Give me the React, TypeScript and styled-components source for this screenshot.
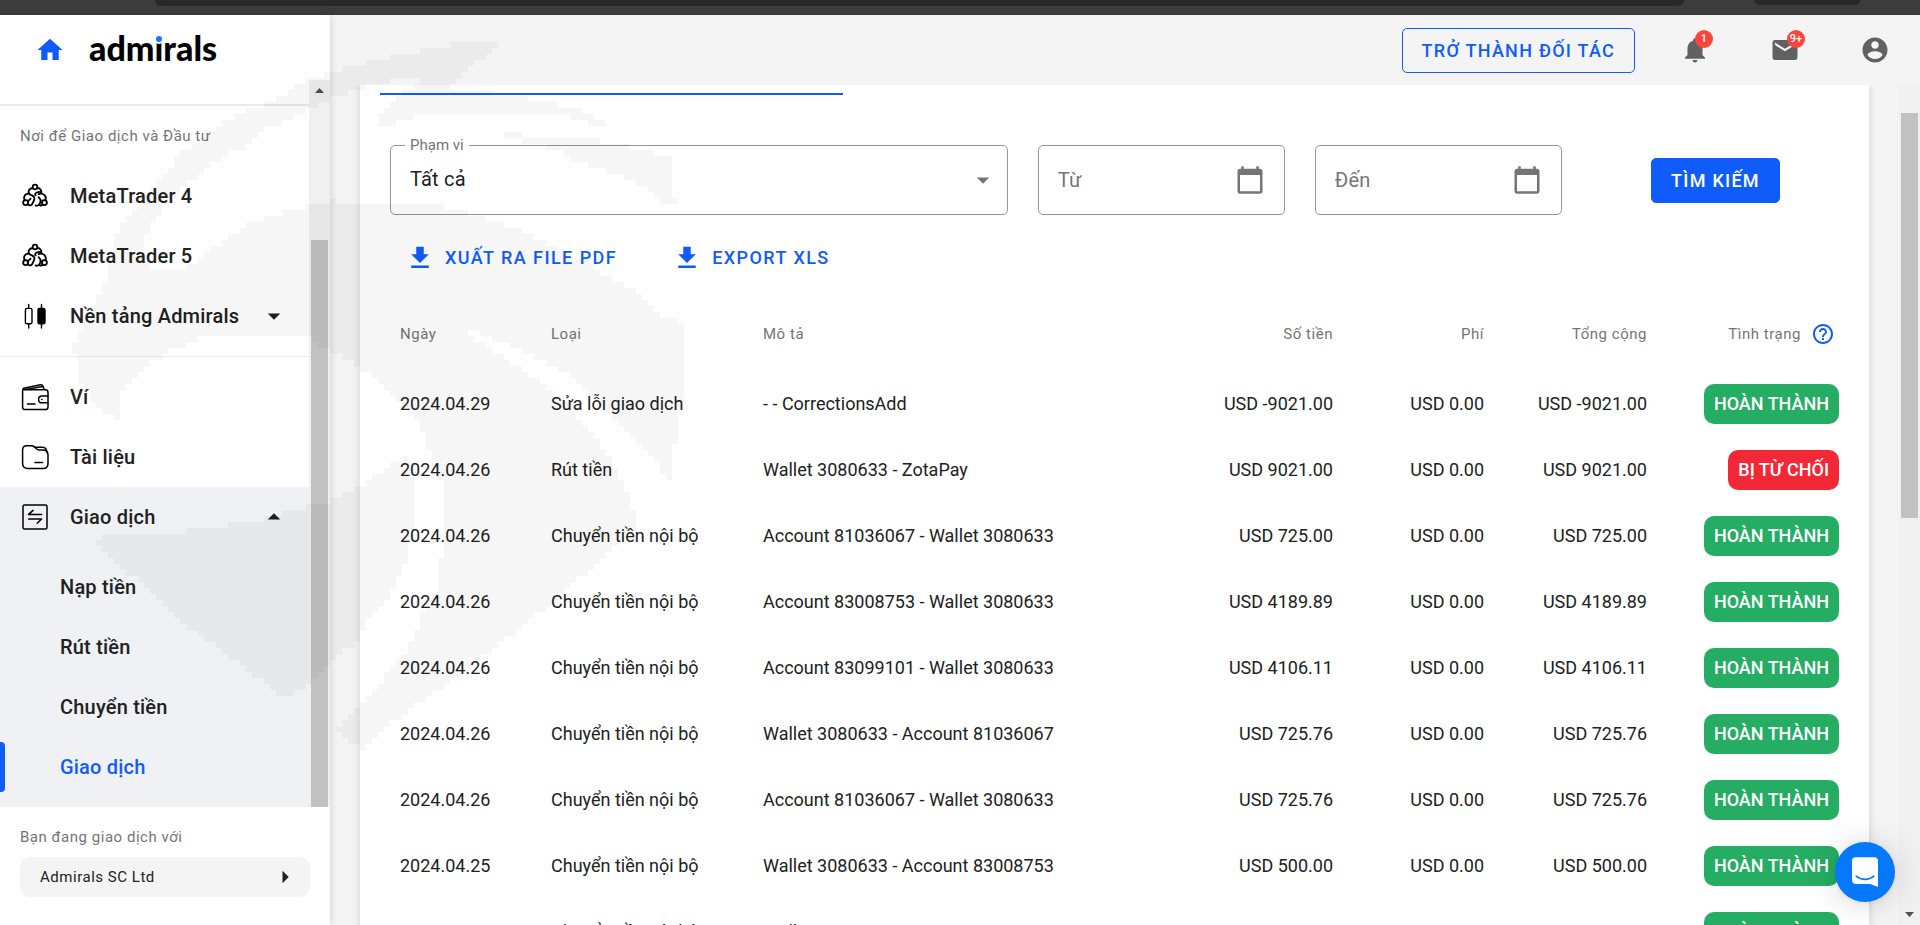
import React from "react";
import styled, { createGlobalStyle } from "styled-components";

const blue = "#105cfb";
const ink = "#212121";
const muted = "#757575";
const captionSpacing = "0.035em";

const GlobalStyle = createGlobalStyle`
  *, *::before, *::after { box-sizing: border-box; }
  body {
    margin: 0;
    background: #f4f4f4;
    color: ${ink};
    font-family: Roboto, "Noto Sans", sans-serif;
    font-size: 18px;
  }
  button, input, select { font-family: inherit; }
`;

/* ---------- shared icons ---------- */

const materialPaths = {
  home: "M10 20v-6h4v6h5v-8h3L12 3 2 12h3v8z",
  bell: "M12 22c1.1 0 2-.9 2-2h-4c0 1.1.89 2 2 2zm6-6v-5c0-3.07-1.64-5.64-4.5-6.32V4c0-.83-.67-1.5-1.5-1.5s-1.5.67-1.5 1.5v.68C7.63 5.36 6 7.92 6 11v5l-2 2v1h16v-1l-2-2z",
  mail: "M20 4H4c-1.1 0-1.99.9-1.99 2L2 18c0 1.1.9 2 2 2h16c1.1 0 2-.9 2-2V6c0-1.1-.9-2-2-2zm0 4l-8 5-8-5V6l8 5 8-5v2z",
  account:
    "M12 2C6.48 2 2 6.48 2 12s4.48 10 10 10 10-4.48 10-10S17.52 2 12 2zm0 3c1.66 0 3 1.34 3 3s-1.34 3-3 3-3-1.34-3-3 1.34-3 3-3zm0 14.2c-2.5 0-4.71-1.28-6-3.22.03-1.99 4-3.08 6-3.08 1.99 0 5.97 1.09 6 3.08-1.29 1.94-3.5 3.22-6 3.22z",
  download: "M19 9h-4V3H9v6H5l7 7 7-7zM5 18v2h14v-2H5z",
  calendar:
    "M20 3h-1V1h-2v2H7V1H5v2H4c-1.1 0-2 .9-2 2v16c0 1.1.9 2 2 2h16c1.1 0 2-.9 2-2V5c0-1.1-.9-2-2-2zm0 18H4V8h16v13z",
  help: "M11 18h2v-2h-2v2zm1-16C6.48 2 2 6.48 2 12s4.48 10 10 10 10-4.48 10-10S17.52 2 12 2zm0 18c-4.41 0-8-3.59-8-8s3.59-8 8-8 8 3.59 8 8-3.59 8-8 8zm0-14c-2.21 0-4 1.79-4 4h2c0-1.1.9-2 2-2s2 .9 2 2c0 2-3 1.75-3 5h2c0-2.25 3-2.5 3-5 0-2.21-1.79-4-4-4z",
  down: "M7 10l5 5 5-5z",
  up: "M7 14l5-5 5 5z",
  right: "M10 17l5-5-5-5z",
};

const IconSvg = styled.svg<{ $size: number }>`
  display: block;
  flex: none;
  width: ${(p) => p.$size}px;
  height: ${(p) => p.$size}px;
  fill: currentColor;
`;

function Icon({ name, size = 30 }: { name: keyof typeof materialPaths; size?: number }) {
  return (
    <IconSvg $size={size} viewBox="0 0 24 24" aria-hidden="true">
      <path d={materialPaths[name]} />
    </IconSvg>
  );
}

const LineSvg = styled.svg`
  display: block;
  flex: none;
  width: 30px;
  height: 30px;
  fill: none;
  stroke: #000;
  stroke-linecap: round;
  stroke-linejoin: round;
`;

const TraderIcon = () => (
  <LineSvg viewBox="0 0 30 30" strokeWidth="1.8" aria-hidden="true">
    <circle cx="15" cy="6" r="2.3" />
    <circle cx="5.6" cy="21.6" r="2.5" />
    <circle cx="24.4" cy="21.6" r="2.5" />
    <path d="M12.6 7C9.4 7.2 7.6 10.4 9.2 12.7C10.3 14.4 13.5 14 14.3 16.6C15 19.3 12.9 20.7 12.2 23.2C11.2 25.3 8.4 24.3 7.8 23" />
    <path d="M17.4 7C20.3 7.2 21.6 9.2 21.4 11.4C19 10 13.4 12.2 15.6 14.4" />
    <path d="M4.8 19.2C2.8 15.8 5.2 12.4 8.8 12.6" />
    <path d="M18.6 13.2C23 11.4 27 15 25.4 19.2" />
    <path d="M7.9 20.3L10.6 17.6" />
    <path d="M18.6 16.2C20.8 18.4 21.8 20.4 19.4 23C18.8 24.4 17 25.2 15.6 24.4M20 24.4C21 24.7 22 24.3 22.6 23.4" />
  </LineSvg>
);

const CandlesIcon = () => (
  <LineSvg viewBox="0 0 30 30" strokeWidth="1.4" aria-hidden="true">
    <rect x="5.4" y="7.4" width="6.6" height="15.4" rx="1.6" />
    <path d="M8.7 3.4V7M8.7 23.2V27M21.5 3.4V7M21.5 23.2V27" />
    <rect x="18" y="7.4" width="7" height="15.4" rx="1.6" fill="#000" />
  </LineSvg>
);

const WalletIcon = () => (
  <LineSvg viewBox="0 0 30 30" strokeWidth="1.5" aria-hidden="true">
    <path d="M2.6 8.4V25Q2.6 27.6 5.2 27.6H25.4Q28 27.6 28 25V10.4Q28 7.8 25.4 7.8H3.6Q2 7.4 3.8 6.2L20.4 2.7Q22.6 2.4 23.2 4.4L24.2 7.4M6 7.4L22.6 4.6" />
    <path d="M28 14H22Q18.6 14 18.6 17.4T22 20.8H28M21.8 17.4h.2M7.4 22H15" />
  </LineSvg>
);

const FolderIcon = () => (
  <LineSvg viewBox="0 0 30 30" strokeWidth="1.5" aria-hidden="true">
    <path d="M6.6 3.8H12Q13.4 3.8 14.4 4.8L16.4 6.8Q17.4 8 19 8H22.6Q28 8 28 13V21.4Q28 26.4 23 26.4H8Q2.6 26.4 2.6 21.4V8Q2.6 3.8 6.6 3.8Z" />
    <path d="M14.4 5.2H22.6Q26.6 5.2 27 10.6M15 20.6H22.6" />
  </LineSvg>
);

const TransferIcon = () => (
  <LineSvg viewBox="0 0 30 30" strokeWidth="1.5" aria-hidden="true">
    <rect x="3" y="3" width="24" height="24" rx="1.6" />
    <path d="M13 8.4L8.6 12.4H21.6M8.6 17H21.6L17.2 21.2" />
  </LineSvg>
);

/* ---------- page frame ---------- */

const Page = styled.div`
  position: relative;
  display: flex;
  flex-direction: column;
  height: 100vh;
  overflow: hidden;
`;

const BrowserEdge = styled.div`
  flex: none;
  display: flex;
  height: 15px;
  padding: 0 60px 0 155px;
  gap: 70px;
  background: #3c3c3c;
`;

const EdgePill = styled.div<{ $wide?: boolean }>`
  flex: ${(p) => (p.$wide ? "1" : "0 0 106px")};
  height: ${(p) => (p.$wide ? 6 : 5)}px;
  border-radius: 0 0 14px 14px;
  background: #282828;
`;

const Body = styled.div`
  flex: 1;
  min-height: 0;
  display: flex;
`;

/* ---------- scroll rail ---------- */

const Rail = styled.div`
  flex: none;
  width: 21px;
  display: flex;
  flex-direction: column;
  align-items: center;
  background: #f0f0f0;
  color: #505050;
`;

const RailArrow = styled.span<{ $hidden?: boolean }>`
  flex: none;
  height: 21px;
  display: grid;
  place-items: center;
  visibility: ${(p) => (p.$hidden ? "hidden" : "visible")};
`;

const RailGap = styled.span<{ $grow: number }>`
  flex: ${(p) => p.$grow} 1 0;
`;

const RailThumb = styled.span<{ $grow: number }>`
  flex: ${(p) => p.$grow} 1 0;
  width: 17px;
  background: #c1c1c1;
`;

const RailGlyph = ({ up }: { up?: boolean }) => (
  <svg width="9" height="5" viewBox="0 0 9 5" fill="currentColor" aria-hidden="true">
    <path d={up ? "M0 5L4.5 0L9 5Z" : "M0 0L4.5 5L9 0Z"} />
  </svg>
);

/* ---------- sidebar ---------- */

const Sidebar = styled.aside`
  flex: none;
  width: 330px;
  display: flex;
  flex-direction: column;
  background: #fff;
  box-shadow: 0 0 8px rgba(0, 0, 0, 0.16);
  z-index: 1;
`;

const Brand = styled.div`
  flex: none;
  height: 65px;
  padding: 4px 0 0 35px;
  display: flex;
  align-items: center;
  gap: 24px;
`;

const HomeLink = styled.a`
  color: ${blue};
`;

const Logo = styled.span`
  padding-bottom: 4px;
  font-family: Lato, sans-serif;
  font-weight: 900;
  font-size: 34px;
  line-height: 40px;
  color: #000;
  white-space: nowrap;
`;

/* The "i" carries a round blue dot in place of the typeface's own. */
const LogoI = styled.span`
  position: relative;
  display: inline-block;

  &::after {
    content: "";
    position: absolute;
    left: calc(50% - 3px);
    top: 8px;
    width: 6px;
    height: 6px;
    border-radius: 50%;
    background: #0a7cff;
    box-shadow: 0 0 0 2px #fff;
  }
`;

const SideScroll = styled.div`
  flex: 1;
  min-height: 0;
  display: flex;
`;

const Nav = styled.nav`
  flex: 1;
  min-width: 0;
  overflow: hidden;
  padding-top: 24px;
`;

const NavSection = styled.div<{ $first?: boolean }>`
  border-top: ${(p) => (p.$first ? 2 : 1)}px solid #ebebeb;
  padding: ${(p) => (p.$first ? "0 0 10px" : "10px 0 0")};
`;

const NavHeading = styled.div`
  height: 60px;
  padding: 0 20px;
  display: flex;
  align-items: center;
  font-size: 15px;
  letter-spacing: ${captionSpacing};
  color: ${muted};
`;

const NavGroup = styled.div`
  background: #f0f1f4;
  padding-bottom: 10px;
`;

const NavItem = styled.a`
  height: 60px;
  padding: 0 20px;
  display: flex;
  align-items: center;
  gap: 20px;
  font-size: 20px;
  font-weight: 500;
  letter-spacing: 0.01em;
  color: ${ink};
  text-decoration: none;
  white-space: nowrap;
`;

const NavLabel = styled.span`
  flex: 1;
  min-width: 0;
`;

const SubList = styled.div`
  padding-top: 10px;
`;

const SubItem = styled.a<{ $active?: boolean }>`
  position: relative;
  height: 60px;
  padding-left: 60px;
  display: flex;
  align-items: center;
  font-size: 20px;
  font-weight: 500;
  letter-spacing: 0.01em;
  color: ${(p) => (p.$active ? blue : ink)};
  text-decoration: none;

  &::before {
    content: "";
    display: ${(p) => (p.$active ? "block" : "none")};
    position: absolute;
    left: 0;
    top: 5px;
    bottom: 5px;
    width: 5px;
    border-radius: 0 4px 4px 0;
    background: ${blue};
  }
`;

const Entity = styled.div`
  flex: none;
  padding: 20px 20px 28px;
`;

const EntityLabel = styled.div`
  height: 20px;
  line-height: 20px;
  margin-bottom: 10px;
  font-size: 15px;
  letter-spacing: ${captionSpacing};
  color: ${muted};
`;

const EntityButton = styled.button`
  width: 100%;
  height: 40px;
  padding: 0 10px 0 20px;
  display: flex;
  align-items: center;
  justify-content: space-between;
  border: 0;
  border-radius: 10px;
  background: #f4f4f4;
  font-size: 15px;
  letter-spacing: ${captionSpacing};
  color: ${ink};
`;

/* ---------- main column ---------- */

const Main = styled.main`
  flex: 1;
  min-width: 0;
  display: flex;
  flex-direction: column;
`;

const TopBar = styled.header`
  flex: none;
  height: 70px;
  padding-right: 30px;
  display: flex;
  align-items: center;
  justify-content: flex-end;
`;

const Button = styled.button<{ $filled?: boolean }>`
  height: 45px;
  padding: 0 19px;
  border: 1px solid ${blue};
  border-radius: 5px;
  background: ${(p) => (p.$filled ? blue : "transparent")};
  color: ${(p) => (p.$filled ? "#fff" : blue)};
  font-size: 18px;
  font-weight: 500;
  letter-spacing: 0.07em;
  text-transform: uppercase;
  white-space: nowrap;
`;

const IconRow = styled.div`
  margin-left: 45px;
  display: flex;
  gap: 60px;
`;

const IconButton = styled.button`
  position: relative;
  padding: 0;
  border: 0;
  background: none;
  color: #616161;
`;

const Badge = styled.span<{ $wide?: boolean }>`
  position: absolute;
  top: -5px;
  right: ${(p) => (p.$wide ? -5 : -3)}px;
  width: 18px;
  height: 18px;
  border-radius: 9px;
  background: #ff4539;
  color: #fff;
  font-size: 11px;
  font-weight: 500;
  line-height: 18px;
  text-align: center;
`;

const Viewport = styled.div`
  flex: 1;
  min-height: 0;
  display: flex;
`;

const Scroller = styled.div`
  flex: 1;
  min-width: 0;
  overflow: hidden;
  padding: 0 30px;
`;

const Card = styled.section`
  min-height: 100%;
  padding: 8px 20px 0;
  background: #fff;
  box-shadow: 0 0 8px rgba(0, 0, 0, 0.14);
`;

const TabMarker = styled.div`
  width: 31.5%;
  height: 2px;
  background: ${blue};
`;

const Filters = styled.form`
  margin: 50px 10px 0;
  display: grid;
  grid-template-columns: minmax(0, 5fr) repeat(3, minmax(0, 2fr));
  gap: 30px;
  align-items: center;
`;

const Field = styled.div`
  position: relative;
  height: 70px;
  display: flex;
  align-items: center;
  border: 1px solid #949494;
  border-radius: 5px;
`;

const FieldLabel = styled.label`
  position: absolute;
  top: -10px;
  left: 14px;
  padding: 0 5px;
  background: #fff;
  font-size: 15px;
  line-height: 18px;
  color: ${muted};
`;

const Select = styled.select`
  appearance: none;
  width: 100%;
  height: 100%;
  padding: 0 50px 2px 19px;
  border: 0;
  background: none;
  font-size: 20px;
  letter-spacing: 0.01em;
  color: ${ink};
`;

const SelectArrow = styled.span`
  position: absolute;
  right: 9px;
  color: ${muted};
  pointer-events: none;
`;

const DateInput = styled.input`
  flex: 1;
  min-width: 0;
  height: 100%;
  padding: 0 0 0 19px;
  border: 0;
  background: none;
  font-size: 20px;
  letter-spacing: 0.01em;
  color: ${ink};

  &::placeholder {
    color: ${muted};
    opacity: 1;
  }
`;

const CalendarButton = styled.button`
  margin-right: 19px;
  padding: 0;
  border: 0;
  background: none;
  color: ${muted};
`;

const SearchSlot = styled.div`
  display: flex;
  justify-content: center;
`;

const Exports = styled.div`
  margin: 20px 10px 0;
  display: flex;
  gap: 20px;
`;

const ExportButton = styled.button`
  height: 45px;
  padding: 0 20px 0 15px;
  display: flex;
  align-items: center;
  gap: 10px;
  border: 0;
  background: none;
  color: ${blue};
  font-size: 18px;
  font-weight: 500;
  letter-spacing: 0.08em;
`;

const Table = styled.table`
  width: calc(100% - 10px);
  margin: 17px 0 0 10px;
  border-collapse: collapse;
  table-layout: fixed;
`;

const Col = styled.col<{ $w?: number }>`
  width: ${(p) => (p.$w ? `${p.$w}px` : "auto")};
`;

const Th = styled.th<{ $right?: boolean }>`
  height: 74px;
  padding: 0 10px;
  text-align: ${(p) => (p.$right ? "right" : "left")};
  font-size: 15px;
  font-weight: 400;
  letter-spacing: ${captionSpacing};
  color: ${muted};
  white-space: nowrap;
`;

const Td = styled.td<{ $right?: boolean }>`
  height: 66px;
  padding: 0 10px 2px;
  text-align: ${(p) => (p.$right ? "right" : "left")};
  font-size: 18px;
  white-space: nowrap;
`;

const StatusCell = styled(Td)`
  padding-bottom: 0;
`;

const StatusHead = styled.span`
  display: flex;
  align-items: center;
  justify-content: flex-end;
  gap: 10px;
  padding-right: 4px;
`;

const HelpButton = styled.button`
  padding: 0;
  border: 0;
  background: none;
  color: ${blue};
`;

const Status = styled.span<{ $bad?: boolean }>`
  display: inline-block;
  height: 40px;
  padding: 0 10px;
  border-radius: 10px;
  background: ${(p) => (p.$bad ? "#f32837" : "#25ae63")};
  color: #fff;
  font-size: 18px;
  font-weight: 500;
  line-height: 39px;
  vertical-align: middle;
`;

const ChatButton = styled.button`
  position: absolute;
  right: 25px;
  bottom: 23px;
  width: 60px;
  height: 60px;
  padding: 0;
  display: grid;
  place-items: center;
  border: 0;
  border-radius: 50%;
  background: #0678fb;
  box-shadow: 0 1px 6px rgba(0, 0, 0, 0.06), 0 2px 32px rgba(0, 0, 0, 0.16);
  z-index: 2;
`;

/* ---------- blocky emblem laid over the page ---------- */

const emblemShapes: number[][][] = [
  [
    [501, 45], [450, 45], [407, 53], [368, 62], [347, 68], [310, 80], [287, 92], [263, 105], [227, 120],
    [203, 138], [183, 152], [160, 177], [143, 197], [127, 218], [114, 238], [109, 276], [97, 300], [80, 330],
    [74, 347], [80, 383], [92, 400], [113, 418], [125, 421], [120, 413], [120, 392], [143, 370], [167, 352],
    [188, 343], [212, 334], [267, 334], [310, 339], [328, 350], [360, 367], [378, 380], [397, 397], [417, 420],
    [427, 442], [433, 460], [443, 487], [444, 530], [438, 587], [420, 620], [410, 647], [397, 663], [380, 683],
    [363, 703], [343, 720], [334, 730], [350, 743], [362, 749], [380, 733], [417, 703], [453, 680], [487, 653],
    [517, 630], [553, 603], [577, 580], [617, 547], [633, 530], [633, 510], [623, 483], [607, 453], [590, 430],
    [567, 403], [533, 377], [507, 360], [487, 347], [467, 334], [460, 327], [483, 335], [523, 351], [563, 371],
    [587, 391], [610, 413], [640, 443], [660, 467], [665, 478], [670, 478], [674, 450], [680, 427], [682, 377],
    [686, 367], [686, 335], [680, 323], [657, 313], [643, 300], [634, 290], [600, 273], [584, 260], [560, 250],
    [542, 242], [517, 230], [484, 218], [466, 212], [444, 207], [409, 202], [333, 201], [300, 208], [273, 217],
    [247, 225], [227, 238], [210, 250], [197, 260], [182, 270], [150, 270], [143, 260], [141, 240], [153, 223],
    [163, 207], [183, 187], [207, 170], [227, 153], [247, 147], [257, 133], [287, 120], [310, 108], [330, 100],
    [353, 92], [380, 83], [400, 79], [422, 80], [418, 85], [400, 95], [390, 107], [375, 120], [375, 126],
    [390, 125], [400, 120], [427, 114], [555, 114], [575, 119], [593, 125], [610, 125], [593, 115], [575, 108],
    [549, 103], [522, 98], [484, 92], [448, 93], [457, 77], [473, 65], [486, 55],
  ],
  [
    [506, 132], [531, 137], [593, 137], [607, 143], [642, 149], [674, 160], [675, 200], [680, 207], [670, 207],
    [658, 197], [642, 187], [616, 173], [580, 163], [562, 153], [531, 142], [506, 138],
  ],
  [
    [97, 542], [103, 537], [177, 532], [227, 525], [260, 520], [283, 513], [307, 507], [333, 500], [360, 487],
    [370, 480], [383, 472], [403, 457], [408, 457], [415, 463], [415, 517], [408, 553], [397, 583], [387, 600],
    [367, 623], [357, 640], [333, 662], [313, 677], [305, 688], [285, 698], [257, 677], [230, 657], [213, 643],
    [200, 637], [177, 617], [153, 597], [133, 577], [117, 563], [103, 550],
  ],
];

const CELL = 6;

/* Cuts a polygon into horizontal bands and rounds each band to whole cells. */
function blockPath(points: number[][]): string {
  const snap = (v: number) => Math.round(v / CELL) * CELL;
  const ys = points.map((p) => p[1]);
  let d = "";
  for (let y = snap(Math.min(...ys)) - CELL; y <= Math.max(...ys); y += CELL) {
    const mid = y + CELL / 2 + 0.01;
    const hits: number[] = [];
    points.forEach(([x1, y1], i) => {
      const [x2, y2] = points[(i + 1) % points.length];
      if (y1 > mid !== y2 > mid) hits.push(x1 + ((mid - y1) / (y2 - y1)) * (x2 - x1));
    });
    hits.sort((a, b) => a - b);
    for (let i = 0; i + 1 < hits.length; i += 2) {
      const a = snap(hits[i]);
      const b = snap(hits[i + 1]);
      if (b > a) d += `M${a} ${y}H${b}V${y + CELL}H${a}Z`;
    }
  }
  return d;
}

const emblemPath = emblemShapes.map(blockPath).join("");

const Emblem = styled.svg`
  position: absolute;
  left: 0;
  top: 0;
  width: 720px;
  height: 780px;
  fill: rgba(0, 0, 0, 0.037);
  shape-rendering: crispEdges;
  pointer-events: none;
  z-index: 3;
`;

/* ---------- data ---------- */

const DONE = "HOÀN THÀNH";
const INTERNAL = "Chuyển tiền nội bộ";

const rows = [
  { date: "2024.04.29", type: "Sửa lỗi giao dịch", text: "- - CorrectionsAdd", sum: "USD -9021.00" },
  { date: "2024.04.26", type: "Rút tiền", text: "Wallet 3080633 - ZotaPay", sum: "USD 9021.00", bad: true },
  { date: "2024.04.26", type: INTERNAL, text: "Account 81036067 - Wallet 3080633", sum: "USD 725.00" },
  { date: "2024.04.26", type: INTERNAL, text: "Account 83008753 - Wallet 3080633", sum: "USD 4189.89" },
  { date: "2024.04.26", type: INTERNAL, text: "Account 83099101 - Wallet 3080633", sum: "USD 4106.11" },
  { date: "2024.04.26", type: INTERNAL, text: "Wallet 3080633 - Account 81036067", sum: "USD 725.76" },
  { date: "2024.04.26", type: INTERNAL, text: "Account 81036067 - Wallet 3080633", sum: "USD 725.76" },
  { date: "2024.04.25", type: INTERNAL, text: "Wallet 3080633 - Account 83008753", sum: "USD 500.00" },
  { date: "2024.04.25", type: INTERNAL, text: "Wallet 3080633 - Account 83008753", sum: "USD 500.00" },
];

const subItems = ["Nạp tiền", "Rút tiền", "Chuyển tiền", "Giao dịch"];

/* ---------- app ---------- */

export default function App() {
  return (
    <>
      <GlobalStyle />
      <Page>
        <BrowserEdge>
          <EdgePill $wide />
          <EdgePill />
        </BrowserEdge>
        <Body>
          <Sidebar>
            <Brand>
              <HomeLink href="#home" aria-label="Home">
                <Icon name="home" />
              </HomeLink>
              <Logo>
                adm<LogoI>i</LogoI>rals
              </Logo>
            </Brand>
            <SideScroll>
              <Nav>
                <NavSection $first>
                  <NavHeading>Nơi để Giao dịch và Đầu tư</NavHeading>
                  <NavItem href="#mt4">
                    <TraderIcon />
                    <NavLabel>MetaTrader 4</NavLabel>
                  </NavItem>
                  <NavItem href="#mt5">
                    <TraderIcon />
                    <NavLabel>MetaTrader 5</NavLabel>
                  </NavItem>
                  <NavItem href="#platform">
                    <CandlesIcon />
                    <NavLabel>Nền tảng Admirals</NavLabel>
                    <Icon name="down" />
                  </NavItem>
                </NavSection>
                <NavSection>
                  <NavItem href="#wallet">
                    <WalletIcon />
                    <NavLabel>Ví</NavLabel>
                  </NavItem>
                  <NavItem href="#documents">
                    <FolderIcon />
                    <NavLabel>Tài liệu</NavLabel>
                  </NavItem>
                  <NavGroup>
                    <NavItem href="#transactions">
                      <TransferIcon />
                      <NavLabel>Giao dịch</NavLabel>
                      <Icon name="up" />
                    </NavItem>
                    <SubList>
                      {subItems.map((label, i) => (
                        <SubItem key={label} href={`#sub-${i}`} $active={i === 3}>
                          {label}
                        </SubItem>
                      ))}
                    </SubList>
                  </NavGroup>
                </NavSection>
              </Nav>
              <Rail aria-hidden="true">
                <RailArrow>
                  <RailGlyph up />
                </RailArrow>
                <RailGap $grow={139} />
                <RailThumb $grow={567} />
              </Rail>
            </SideScroll>
            <Entity>
              <EntityLabel>Bạn đang giao dịch với</EntityLabel>
              <EntityButton type="button">
                Admirals SC Ltd
                <Icon name="right" />
              </EntityButton>
            </Entity>
          </Sidebar>

          <Main>
            <TopBar>
              <Button type="button">Trở thành đối tác</Button>
              <IconRow>
                <IconButton type="button" aria-label="Thông báo">
                  <Icon name="bell" />
                  <Badge>1</Badge>
                </IconButton>
                <IconButton type="button" aria-label="Thư">
                  <Icon name="mail" />
                  <Badge $wide>9+</Badge>
                </IconButton>
                <IconButton type="button" aria-label="Tài khoản">
                  <Icon name="account" />
                </IconButton>
              </IconRow>
            </TopBar>
            <Viewport>
              <Scroller>
                <Card>
                  <TabMarker />
                  <Filters onSubmit={(e) => e.preventDefault()}>
                    <Field>
                      <FieldLabel htmlFor="range">Phạm vi</FieldLabel>
                      <Select id="range">
                        <option>Tất cả</option>
                      </Select>
                      <SelectArrow>
                        <Icon name="down" />
                      </SelectArrow>
                    </Field>
                    <Field>
                      <DateInput aria-label="Từ" placeholder="Từ" />
                      <CalendarButton type="button" aria-label="Chọn ngày bắt đầu">
                        <Icon name="calendar" />
                      </CalendarButton>
                    </Field>
                    <Field>
                      <DateInput aria-label="Đến" placeholder="Đến" />
                      <CalendarButton type="button" aria-label="Chọn ngày kết thúc">
                        <Icon name="calendar" />
                      </CalendarButton>
                    </Field>
                    <SearchSlot>
                      <Button type="submit" $filled>
                        Tìm kiếm
                      </Button>
                    </SearchSlot>
                  </Filters>
                  <Exports>
                    <ExportButton type="button">
                      <Icon name="download" />
                      XUẤT RA FILE PDF
                    </ExportButton>
                    <ExportButton type="button">
                      <Icon name="download" />
                      EXPORT XLS
                    </ExportButton>
                  </Exports>
                  <Table>
                    <colgroup>
                      <Col $w={151} />
                      <Col $w={212} />
                      <Col />
                      <Col $w={180} />
                      <Col $w={151} />
                      <Col $w={163} />
                      <Col $w={192} />
                    </colgroup>
                    <thead>
                      <tr>
                        <Th>Ngày</Th>
                        <Th>Loại</Th>
                        <Th>Mô tả</Th>
                        <Th $right>Số tiền</Th>
                        <Th $right>Phí</Th>
                        <Th $right>Tổng cộng</Th>
                        <Th $right>
                          <StatusHead>
                            Tình trạng
                            <HelpButton type="button" aria-label="Trợ giúp">
                              <Icon name="help" size={24} />
                            </HelpButton>
                          </StatusHead>
                        </Th>
                      </tr>
                    </thead>
                    <tbody>
                      {rows.map((row, i) => (
                        <tr key={i}>
                          <Td>{row.date}</Td>
                          <Td>{row.type}</Td>
                          <Td>{row.text}</Td>
                          <Td $right>{row.sum}</Td>
                          <Td $right>USD 0.00</Td>
                          <Td $right>{row.sum}</Td>
                          <StatusCell $right>
                            <Status $bad={row.bad}>{row.bad ? "BỊ TỪ CHỐI" : DONE}</Status>
                          </StatusCell>
                        </tr>
                      ))}
                    </tbody>
                  </Table>
                </Card>
              </Scroller>
              <Rail aria-hidden="true">
                <RailArrow $hidden>
                  <RailGlyph up />
                </RailArrow>
                <RailGap $grow={7} />
                <RailThumb $grow={405} />
                <RailGap $grow={386} />
                <RailArrow>
                  <RailGlyph />
                </RailArrow>
              </Rail>
            </Viewport>
          </Main>
        </Body>
        <ChatButton type="button" aria-label="Chat">
          <svg width="26" height="30" viewBox="0 0 28 32" aria-hidden="true">
            <path d="M28 32s-4.7-1.9-8.5-3.2H3.6C1.6 28.8 0 27.2 0 25.2V3.6C0 1.6 1.6 0 3.6 0h20.8C26.4 0 28 1.6 28 3.6V32z" fill="#fff" />
            <path d="M4.5 20.5C10 25.2 18 25.2 23.5 20.5" fill="none" stroke="#0678fb" strokeWidth="1.8" strokeLinecap="round" />
          </svg>
        </ChatButton>
        <Emblem viewBox="0 0 720 780" aria-hidden="true">
          <path d={emblemPath} />
        </Emblem>
      </Page>
    </>
  );
}
